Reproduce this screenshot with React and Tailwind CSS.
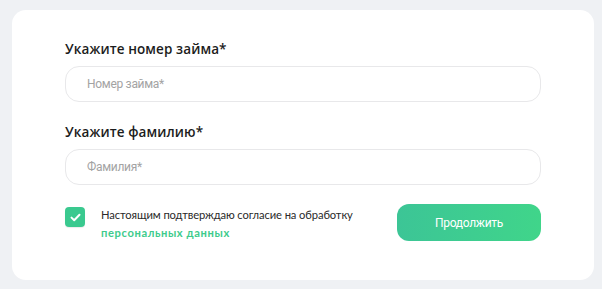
import React from "react";

export default function App() {
  return (
    <div className="w-[602px] h-[289px] bg-[#eff1f4] pt-[10px] pl-[12px]" style={{ fontFamily: 'Roboto, "Liberation Sans", Arial, sans-serif' }}>
      <div className="w-[582px] h-[270px] bg-white rounded-[14px] pl-[53px] pr-[53px] pt-[30px]">
        <div className="text-[13.5px] font-semibold text-[#1c1c1c] leading-[18px] tracking-[0.1px]" style={{ fontFamily: '"Open Sans", sans-serif' }}>
          Укажите номер займа*
        </div>
        <div className="mt-[8px] h-[36px] w-[476px] rounded-[14px] border border-[#e8e8ea] flex items-center pl-[21px] text-[12px] tracking-[-0.3px] text-[#a3a3a3]">
          Номер займа*
        </div>
        <div className="mt-[21px] text-[13.5px] font-semibold text-[#1c1c1c] leading-[18px] tracking-[0.1px]" style={{ fontFamily: '"Open Sans", sans-serif' }}>
          Укажите фамилию*
        </div>
        <div className="mt-[8px] h-[36px] w-[476px] rounded-[14px] border border-[#e8e8ea] flex items-center pl-[21px] text-[12px] tracking-[-0.3px] text-[#a3a3a3]">
          Фамилия*
        </div>
        <div className="mt-[19px] flex items-start w-[476px]">
          <div className="mt-[3px] w-[20px] h-[20px] rounded-[4px] bg-[#3ac98f] flex items-center justify-center shadow-[0_1px_1px_rgba(0,0,0,0.08)]">
            <svg width="11" height="9" viewBox="0 0 11 9" fill="none">
              <path d="M1.5 4.6 L4.2 7.2 L9.5 1.8" stroke="white" strokeWidth="2" strokeLinecap="round" strokeLinejoin="round" />
            </svg>
          </div>
          <div className="ml-[16px] mt-[2px] text-[11.2px] leading-[18px] text-[#2a2a2a] tracking-[-0.1px]" style={{ fontFamily: 'Lato, sans-serif' }}>
            <div>Настоящим подтверждаю согласие на обработку</div>
            <div className="font-bold text-[#3ecb8c] tracking-[0.6px]">персональных данных</div>
          </div>
          <div className="ml-auto h-[37px] w-[144px] rounded-[12px] bg-gradient-to-r from-[#3cc596] to-[#40d58a] flex items-center justify-center text-white text-[12px] tracking-[-0.3px]">
            Продолжить
          </div>
        </div>
      </div>
    </div>
  );
}
